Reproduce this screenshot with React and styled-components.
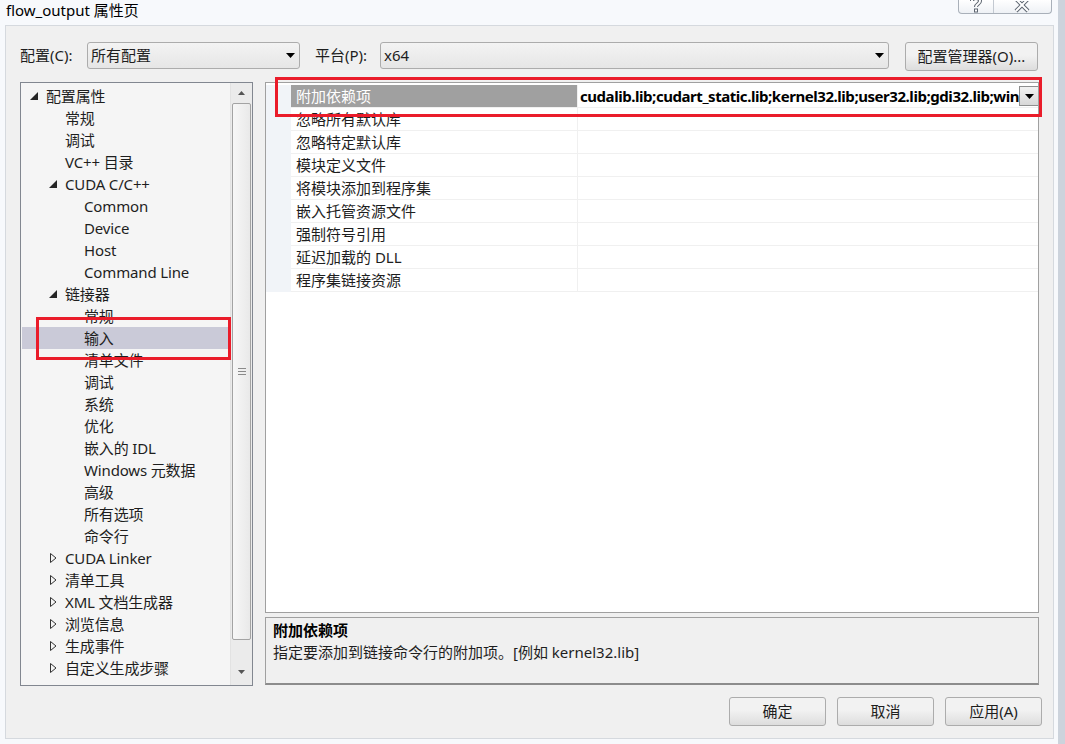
import React from 'react';
import styled, { createGlobalStyle } from 'styled-components';

const GlobalStyle = createGlobalStyle`
    html, body {
        margin: 0;
        padding: 0;
        background: #ccd3dc;
    }
    body {
        font-family: "Noto Sans", "Noto Sans CJK SC", sans-serif;
        font-size: 15px;
        color: #1e1e1e;
    }
    * {
        box-sizing: border-box;
    }
`;

const Window = styled.div`
    width: 1058px;
    height: 744px;
    background: #f7f9fc;
    display: flex;
    flex-direction: column;
    overflow: hidden;
`;

const TitleBar = styled.div`
    height: 25px;
    display: flex;
    align-items: flex-start;
    padding-left: 6px;
`;

const Title = styled.div`
    font-size: 15px;
    line-height: 20px;
    color: #000;
`;

const CaptionButtons = styled.div`
    margin-left: auto;
    margin-right: 6px;
    width: 94px;
    height: 14px;
    display: flex;
    border: 1px solid #a9b0b9;
    border-top: none;
    border-radius: 0 0 4px 4px;
    background: linear-gradient(#ffffff, #eef1f5);
`;

const CaptionButton = styled.div`
    flex: ${(p) => p.grow};
    display: flex;
    justify-content: center;
    align-items: flex-end;
    border-left: ${(p) => (p.divided ? '1px solid #c3c9d1' : 'none')};
`;

const Client = styled.div`
    margin-left: 5px;
    width: 1049px;
    height: 714px;
    border: 1px solid #d5d9de;
    background: #f0f0f0;
    display: flex;
    flex-direction: column;
`;

const TopRow = styled.div`
    margin-top: 16px;
    height: 29px;
    padding-left: 14px;
    display: flex;
    align-items: flex-start;
`;

const FieldLabel = styled.div`
    width: ${(p) => p.w}px;
    margin-left: ${(p) => p.ml || 0}px;
    line-height: 27px;
`;

const Combo = styled.div`
    width: ${(p) => p.w}px;
    height: 27px;
    border: 1px solid #acacac;
    border-radius: 3px;
    background: linear-gradient(#f3f3f3, #e6e6e6);
    display: flex;
    align-items: center;
    padding: 0 4px 0 3px;
`;

const ComboText = styled.span`
    flex: 1;
    line-height: 25px;
`;

const PushButton = styled.div`
    width: ${(p) => p.w}px;
    height: 29px;
    margin-left: ${(p) => p.ml || 0}px;
    border: 1px solid #acacac;
    border-radius: 3px;
    background: linear-gradient(#f2f2f2 45%, #dddddd);
    display: flex;
    align-items: center;
    justify-content: center;
    line-height: 27px;
    color: #1e1e1e;
`;

const MainRow = styled.div`
    margin-top: 11px;
    padding-left: 14px;
    display: flex;
    height: 604px;
`;

const Tree = styled.div`
    position: relative;
    width: 233px;
    height: 604px;
    border: 1px solid #828790;
    background: #f5f5f5;
    display: flex;
`;

const TreeList = styled.div`
    flex: 1;
    padding-top: 2px;
`;

const TreeRow = styled.div`
    height: 22px;
    margin-left: 1px;
    display: flex;
    align-items: center;
    padding-left: ${(p) => 4 + p.level * 19}px;
    background: ${(p) => (p.selected ? '#cacad8' : 'transparent')};
    white-space: nowrap;
`;

const Expander = styled.span`
    width: 16px;
    height: 22px;
    display: flex;
    align-items: center;
    justify-content: center;
`;

const TreeText = styled.span`
    margin-left: 4px;
    line-height: 22px;
    letter-spacing: -0.15px;
`;

const ScrollBar = styled.div`
    width: 22px;
    background: #ebebeb;
    display: flex;
    flex-direction: column;
    align-items: stretch;
    border-left: 1px solid #e2e2e2;
`;

const ScrollArrow = styled.div`
    height: ${(p) => p.h}px;
    display: flex;
    align-items: ${(p) => (p.bottom ? 'flex-end' : 'center')};
    padding-bottom: ${(p) => (p.bottom ? 10 : 0)}px;
    justify-content: center;
`;

const ScrollThumb = styled.div`
    height: ${(p) => p.h}px;
    margin: 1px 1px 0;
    border: 1px solid #a3a3a3;
    border-radius: 2px;
    background: linear-gradient(90deg, #f7f7f7, #e9e9e9);
    display: flex;
    align-items: center;
    justify-content: center;
`;

const Grip = styled.div`
    width: 8px;
    height: 7px;
    border-top: 1px solid #8a8a8a;
    border-bottom: 1px solid #8a8a8a;
    position: relative;
    &::after {
        content: '';
        position: absolute;
        left: 0;
        right: 0;
        top: 2px;
        border-top: 1px solid #8a8a8a;
    }
`;

const Annotation = styled.div`
    position: absolute;
    left: ${(p) => p.x}px;
    top: ${(p) => p.y}px;
    width: ${(p) => p.w}px;
    height: ${(p) => p.h}px;
    border: 3px solid #ea1c2a;
    pointer-events: none;
`;

const RightColumn = styled.div`
    margin-left: 12px;
    width: 774px;
    display: flex;
    flex-direction: column;
    gap: 4px;
`;

const Grid = styled.div`
    position: relative;
    height: 531px;
    border: 1px solid #a0a0a0;
    background: #ffffff;
    padding-top: 2px;
`;

const PropRow = styled.div`
    display: grid;
    grid-template-columns: 25px 286px 1fr;
    height: 23px;
`;

const Gutter = styled.div`
    background: #f1f4f8;
`;

const PropName = styled.div`
    padding-left: 5px;
    line-height: 22px;
    border-bottom: 1px solid #f0f0f0;
    background: ${(p) => (p.selected ? '#a0a0a0' : '#ffffff')};
    color: ${(p) => (p.selected ? '#ffffff' : '#1e1e1e')};
    white-space: nowrap;
`;

const PropValue = styled.div`
    display: flex;
    align-items: center;
    border-left: 1px solid #f0f0f0;
    border-bottom: 1px solid #f0f0f0;
    padding-left: 2px;
    overflow: hidden;
`;

const ValueText = styled.span`
    flex: 1;
    font-weight: 700;
    line-height: 22px;
    letter-spacing: -0.45px;
    white-space: nowrap;
    color: #000;
`;

const DropButton = styled.div`
    width: 20px;
    height: 20px;
    margin-right: 1px;
    flex: none;
    border: 1px solid #8e8f8f;
    background: linear-gradient(#f2f2f2, #d8d8d8);
    display: flex;
    align-items: center;
    justify-content: center;
`;

const Description = styled.div`
    height: 68px;
    border: 1px solid #a0a0a0;
    border-bottom: 2px solid #8c8c8c;
    background: #f0f0f0;
    padding: 1px 7px;
    line-height: 22px;
`;

const DescTitle = styled.div`
    font-weight: 700;
    color: #000;
`;

const ButtonRow = styled.div`
    margin-top: 11px;
    padding-right: 11px;
    display: flex;
    justify-content: flex-end;
    gap: 11px;
`;

const DownTriangle = ({ w = 9, h = 5, color = '#000' }) => (
    <svg width={w} height={h} viewBox={`0 0 ${w} ${h}`}>
        <polygon points={`0,0 ${w},0 ${w / 2},${h}`} fill={color} />
    </svg>
);

const UpTriangle = ({ w = 7, h = 4, color = '#555' }) => (
    <svg width={w} height={h} viewBox={`0 0 ${w} ${h}`}>
        <polygon points={`0,${h} ${w},${h} ${w / 2},0`} fill={color} />
    </svg>
);

const OpenArrow = () => (
    <svg width="8" height="8" viewBox="0 0 8 8">
        <polygon points="8,0 8,8 0,8" fill="#262626" />
    </svg>
);

const ClosedArrow = () => (
    <svg width="8" height="10" viewBox="0 0 8 10">
        <polygon points="1.5,0.5 7,5 1.5,9.5" fill="none" stroke="#333" strokeWidth="1" />
    </svg>
);

const HelpGlyph = () => (
    <svg width="14" height="13" viewBox="0 0 14 13">
        <path d="M3 1 C3 -3 11 -3 11 1 C11 4 7 4 7 7" fill="none" stroke="#5d6570" strokeWidth="4" />
        <path d="M3 1 C3 -3 11 -3 11 1 C11 4 7 4 7 7" fill="none" stroke="#ffffff" strokeWidth="2" />
        <rect x="5" y="8.5" width="4" height="4" fill="#5d6570" />
        <rect x="6" y="9.5" width="2" height="2" fill="#ffffff" />
    </svg>
);

const CloseGlyph = () => (
    <svg width="16" height="12" viewBox="0 0 16 12">
        <path d="M2 -2 L14 10 M14 -2 L2 10" stroke="#5d6570" strokeWidth="4" />
        <path d="M2 -2 L14 10 M14 -2 L2 10" stroke="#ffffff" strokeWidth="2" />
    </svg>
);

const treeItems = [
    { text: '配置属性', level: 0, exp: 'open' },
    { text: '常规', level: 1 },
    { text: '调试', level: 1 },
    { text: 'VC++ 目录', level: 1 },
    { text: 'CUDA C/C++', level: 1, exp: 'open' },
    { text: 'Common', level: 2 },
    { text: 'Device', level: 2 },
    { text: 'Host', level: 2 },
    { text: 'Command Line', level: 2 },
    { text: '链接器', level: 1, exp: 'open' },
    { text: '常规', level: 2 },
    { text: '输入', level: 2, selected: true },
    { text: '清单文件', level: 2 },
    { text: '调试', level: 2 },
    { text: '系统', level: 2 },
    { text: '优化', level: 2 },
    { text: '嵌入的 IDL', level: 2 },
    { text: 'Windows 元数据', level: 2 },
    { text: '高级', level: 2 },
    { text: '所有选项', level: 2 },
    { text: '命令行', level: 2 },
    { text: 'CUDA Linker', level: 1, exp: 'closed' },
    { text: '清单工具', level: 1, exp: 'closed' },
    { text: 'XML 文档生成器', level: 1, exp: 'closed' },
    { text: '浏览信息', level: 1, exp: 'closed' },
    { text: '生成事件', level: 1, exp: 'closed' },
    { text: '自定义生成步骤', level: 1, exp: 'closed' },
];

const properties = [
    '附加依赖项',
    '忽略所有默认库',
    '忽略特定默认库',
    '模块定义文件',
    '将模块添加到程序集',
    '嵌入托管资源文件',
    '强制符号引用',
    '延迟加载的 DLL',
    '程序集链接资源',
];

const App = () => {
    return (
        <Window>
            <GlobalStyle />
            <TitleBar>
                <Title>flow_output 属性页</Title>
                <CaptionButtons>
                    <CaptionButton grow="35">
                        <HelpGlyph />
                    </CaptionButton>
                    <CaptionButton grow="59" divided>
                        <CloseGlyph />
                    </CaptionButton>
                </CaptionButtons>
            </TitleBar>
            <Client>
                <TopRow>
                    <FieldLabel w={67}>配置(C):</FieldLabel>
                    <Combo w={213}>
                        <ComboText>所有配置</ComboText>
                        <DownTriangle />
                    </Combo>
                    <FieldLabel w={65} ml={15}>平台(P):</FieldLabel>
                    <Combo w={509}>
                        <ComboText>x64</ComboText>
                        <DownTriangle />
                    </Combo>
                    <PushButton w={133} ml={16}>配置管理器(O)...</PushButton>
                </TopRow>
                <MainRow>
                    <Tree>
                        <TreeList>
                            {treeItems.map((item, i) => (
                                <TreeRow key={i} level={item.level} selected={item.selected}>
                                    <Expander>
                                        {item.exp === 'open' && <OpenArrow />}
                                        {item.exp === 'closed' && <ClosedArrow />}
                                    </Expander>
                                    <TreeText>{item.text}</TreeText>
                                </TreeRow>
                            ))}
                        </TreeList>
                        <ScrollBar>
                            <ScrollArrow h={19}>
                                <UpTriangle />
                            </ScrollArrow>
                            <ScrollThumb h={537}>
                                <Grip />
                            </ScrollThumb>
                            <ScrollArrow h={44} bottom>
                                <DownTriangle w={7} h={4} color="#555" />
                            </ScrollArrow>
                        </ScrollBar>
                        <Annotation x={15} y={234} w={195} h={43} />
                    </Tree>
                    <RightColumn>
                        <Grid>
                            {properties.map((name, i) => (
                                <PropRow key={name}>
                                    <Gutter />
                                    <PropName selected={i === 0}>{name}</PropName>
                                    <PropValue>
                                        {i === 0 && (
                                            <>
                                                <ValueText>
                                                    cudalib.lib;cudart_static.lib;kernel32.lib;user32.lib;gdi32.lib;win
                                                </ValueText>
                                                <DropButton>
                                                    <DownTriangle />
                                                </DropButton>
                                            </>
                                        )}
                                    </PropValue>
                                </PropRow>
                            ))}
                            <Annotation x={9} y={-6} w={767} h={40} />
                        </Grid>
                        <Description>
                            <DescTitle>附加依赖项</DescTitle>
                            <div>指定要添加到链接命令行的附加项。[例如 kernel32.lib]</div>
                        </Description>
                    </RightColumn>
                </MainRow>
                <ButtonRow>
                    <PushButton w={97}>确定</PushButton>
                    <PushButton w={97}>取消</PushButton>
                    <PushButton w={97}>应用(A)</PushButton>
                </ButtonRow>
            </Client>
        </Window>
    );
};

export default App;
